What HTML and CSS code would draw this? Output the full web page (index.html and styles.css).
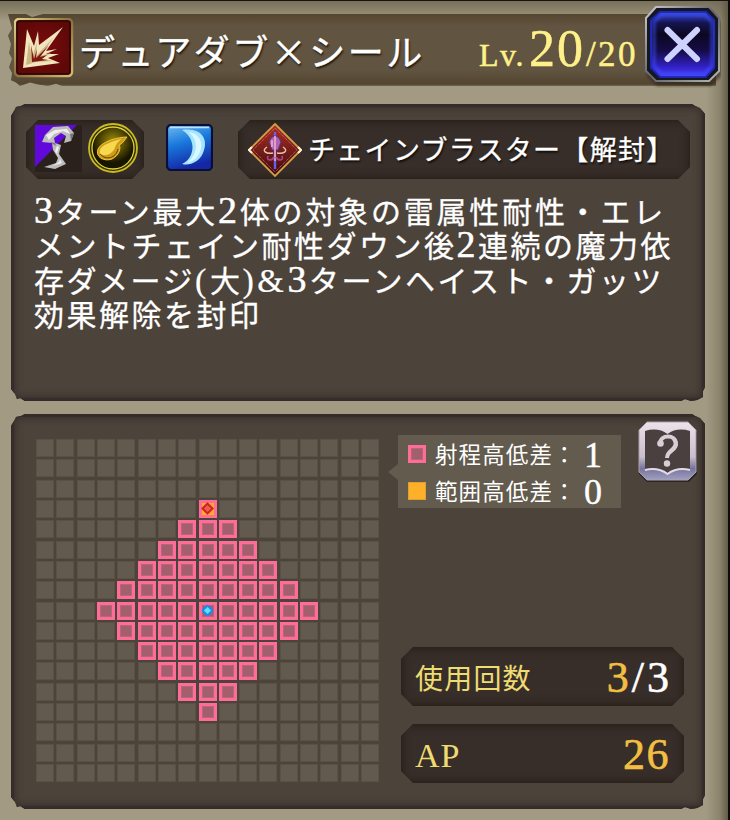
FILE: index.html
```html
<!DOCTYPE html>
<html lang="ja">
<head>
    <meta charset="UTF-8">
    <title>スキル詳細</title>
    <link rel="stylesheet" href="styles.css">
</head>
<body>
<div class="window">
    <div class="header">
        <svg class="skillicon" viewBox="0 0 60 60">
            <defs>
                <linearGradient id="gold" x1="0" y1="0" x2="1" y2="1">
                    <stop offset="0" stop-color="#e3d28c"/><stop offset=".5" stop-color="#8a6f38"/><stop offset="1" stop-color="#d8bc6c"/>
                </linearGradient>
                <radialGradient id="red"><stop offset="0" stop-color="#7d0c0c"/><stop offset="1" stop-color="#5e0808"/></radialGradient>
            </defs>
            <rect x="1" y="1" width="57" height="57" rx="4" fill="url(#red)" stroke="url(#gold)" stroke-width="2.5"/>
            <rect x="3" y="3" width="53" height="53" rx="3" fill="none" stroke="#2a0505" stroke-width="1.5"/>
            <path d="M9 50L13 11L20 28L24 13L25 27L49 9L32 33L43 31L32 36L45 36L34 40L46 45Z" fill="#f1e5bd"/>
            <path d="M12 47L15 24L18 40L23 24L22 38L40 19L26 38L37 35L27 41L39 43L22 44Z" fill="#cdb582"/>
            <path d="M17 27L20 41L23 31L22 40L35 27L26 39L33 37L28 41L34 42L18 44Z" fill="#7d1713"/>
        </svg>
        <div class="title">デュアダブ×シール</div>
        <div class="level"><span class="lv">Lv.</span><span class="now">20</span><span class="max">/20</span></div>
    </div>
    <svg class="close" viewBox="0 0 76 82">
        <defs>
            <linearGradient id="blue" x1="0" y1="0" x2="0" y2="1">
                <stop offset="0" stop-color="#3a4be0"/><stop offset=".17" stop-color="#15144f"/><stop offset=".35" stop-color="#0c0820"/>
                <stop offset=".6" stop-color="#150c48"/><stop offset=".85" stop-color="#3322c8"/><stop offset="1" stop-color="#4a43ff"/>
            </linearGradient>
            <linearGradient id="steel" x1="0" y1="0" x2="1" y2="1">
                <stop offset="0" stop-color="#c9cbd0"/><stop offset=".5" stop-color="#62636c"/><stop offset="1" stop-color="#b4b8b4"/>
            </linearGradient>
            <filter id="soft"><feGaussianBlur stdDeviation="1.6"/></filter>
        </defs>
        <path d="M12 5H66L76 16V70L66 80H12L2 70V16Z" fill="#2a2418" opacity=".6" filter="url(#soft)"/>
        <path d="M11 1H64L74 12V65L64 75H11L1 65V12Z" fill="#16171f" stroke="url(#steel)" stroke-width="2"/>
        <path d="M15 6H61L69 14V62L61 71H15L6 62V14Z" fill="url(#blue)" stroke="#1c24ac" stroke-width="2"/>
        <path d="M16 9H60L67 16V60L59 68H17L9 60V16Z" fill="none" stroke="#3e50ff" stroke-width="3" opacity=".65" filter="url(#soft)"/>
        <path d="M22.500 24L52 53M52 24L22.500 53" stroke="#cdd2ff" stroke-width="6" stroke-linecap="round"/>
    </svg>

    <div class="panel info">
        <div class="row">
            <div class="slot types">
                <svg class="weapon" viewBox="0 0 47 47">
                    <path d="M0 0H47V47H0Z" fill="#2b211c"/>
                    <path d="M0 0H42L0 42Z" fill="#6109da"/>
                    <path d="M10 10L18 2L33 1L39 8L36 16L29 18L31 11L26 8L19 13L20 18L26 20L24 29L31 39L20 44L9 42L21 38L23 33L18 25L17 18L7 17Z" fill="#bcbcbc"/>
                    <path d="M11 10L20 5L32 4L35 9L28 6L19 9L14 15ZM22 21L24 22L22 28L27 38L17 41L24 37L25 34L20 26Z" fill="#eee"/>
                    <path d="M15 17L20 18L21 21ZM35 9L39 8L36 16Z" fill="#76747c"/>
                </svg>
                <svg class="coin" viewBox="0 0 50 50">
                    <defs><radialGradient id="olive" cx=".5" cy=".35"><stop offset="0" stop-color="#a29008"/><stop offset="1" stop-color="#191600"/></radialGradient></defs>
                    <circle cx="25" cy="25" r="24" fill="#332e05" stroke="#c9bc20" stroke-width="1.8"/>
                    <circle cx="25" cy="25" r="21" fill="url(#olive)" stroke="#e0d437" stroke-width="1.3"/>
                    <path d="M39 14C31 14 14 18 10 26C7 34 16 39 24 36C32 32 33 24 31 22C34 21 36 18 39 14Z" fill="#d19a1b" stroke="#e9c63a"/>
                    <path d="M34 16C25 18 13 22 12 27C10 33 19 34 24 29C29 25 25 22 34 16Z" fill="#f7d94d"/>
                    <path d="M12 31C18 38 28 35 30 26" fill="none" stroke="#5a4300"/>
                </svg>
            </div>
            <svg class="moon" viewBox="0 0 47 47">
                <defs><linearGradient id="sky" x1="0" y1="0" x2=".3" y2="1">
                    <stop offset="0" stop-color="#72baf2"/><stop offset=".45" stop-color="#1979dc"/><stop offset="1" stop-color="#1527a5"/>
                </linearGradient></defs>
                <rect x="1" y="1" width="45" height="45" rx="4" fill="url(#sky)" stroke="#080d3a" stroke-width="2.2"/>
                <path d="M4 3.5H43" stroke="#c3e0f8" stroke-width="1.5"/>
                <path d="M16 6C36 3 43 16 37 29C33 38 24 42 16 40C29 34 31 15 16 6Z" fill="#a6e4ff"/>
                <path d="M23 8C35 10 38 21 33 30C30 36 25 38 21 39C32 30 33 17 23 8Z" fill="#dcf8ff"/>
            </svg>
            <div class="slot name">
                <svg class="emblem" viewBox="0 0 54 54">
                    <defs><linearGradient id="ruby" x1="0" y1="0" x2="0" y2="1"><stop offset="0" stop-color="#b03023"/><stop offset="1" stop-color="#3b0a0e"/></linearGradient></defs>
                    <path d="M27 1L53 27L27 53L1 27Z" fill="url(#ruby)" stroke="#d29c48" stroke-width="1.8"/>
                    <path d="M4 24L1 27L4 30M50 24L53 27L50 30" fill="none" stroke="#fff0d5" stroke-width="2"/>
                    <path d="M27 5L49 27L27 49L5 27Z" fill="none" stroke="#dc9180" stroke-width=".8" stroke-dasharray="1 1"/>
                    <path d="M27 9V46" stroke="#6b5cf0" stroke-width="2.4"/>
                    <path d="M23 15Q27 11 31 15L33 19L30 27H24L21 19Z" fill="#aa65b4" stroke="#5d307c"/>
                    <path d="M27 13V38M24 17V24" stroke="#efaecb" stroke-width="1.6"/>
                    <path d="M19 24C13 28 18 31 25 30M35 24C41 28 36 31 29 30" fill="none" stroke="#e8c4b0" stroke-width="1.4"/>
                    <path d="M20 33C18 38 24 38 26 34M34 33C36 38 30 38 28 34" fill="none" stroke="#a74482" stroke-width="1.8"/>
                </svg>
                <span class="nametext">チェインブラスター【解封】</span>
            </div>
        </div>
        <div class="desc">
            <p class="l1"><b>3</b>ターン最大<b>2</b>体の対象の雷属性耐性・エレ</p>
            <p class="l2">メントチェイン耐性ダウン後<b>2</b>連続の魔力依</p>
            <p class="l3">存ダメージ<b class="mark">(</b>大<b class="mark">)&amp;</b><b>3</b>ターンヘイスト・ガッツ</p>
            <p class="l4">効果解除を封印</p>
        </div>
    </div>

    <div class="panel range">
        <div class="map"></div>
        <div class="side">
            <div class="top">
                <div class="legend">
                    <div class="item"><i class="pink"></i><span>射程高低差：</span><b>1</b></div>
                    <div class="item"><i class="orange"></i><span>範囲高低差：</span><b>0</b></div>
                </div>
                <svg class="help" viewBox="0 0 60 62">
                    <defs><linearGradient id="silver" x1="0" y1="0" x2="0" y2="1">
                        <stop offset="0" stop-color="#eee2ea"/><stop offset=".6" stop-color="#c9becb"/><stop offset=".8" stop-color="#77749b"/><stop offset="1" stop-color="#a09fc2"/>
                    </linearGradient></defs>
                    <path d="M9 3H51L59 11V53L51 61H9L1 53V11Z" fill="#2b2623"/>
                    <path d="M9 1H50L58 9V51L50 59H9L1 51V9Z" fill="url(#silver)" stroke="#aaa1ae"/>
                    <path d="M7 10Q20 6 29.500 13Q39 6 52 10V49Q39 46 29.500 53Q20 46 7 49Z" fill="#49403f"/>
                    <path d="M7 49Q20 46 29.500 53Q39 46 52 49" fill="none" stroke="#e2dce8" stroke-width="2"/>
                    <path d="M22 23C22 13 38 13 38 23C38 30 29 29 29 37" fill="none" stroke="#dacdd3" stroke-width="4"/>
                    <path d="M36 18C40 24 36 27 32 31" fill="none" stroke="#dacdd3" stroke-width="4"/>
                    <circle cx="22.500" cy="22.500" r="3.300" fill="#dacdd3"/>
                    <circle cx="29" cy="42.500" r="3.200" fill="#dacdd3"/>
                </svg>
            </div>
            <div class="stats">
                <div class="slot stat"><span>使用回数</span><div class="value count">3<em>/3</em></div></div>
                <div class="slot stat"><span class="ap">AP</span><div class="value">26</div></div>
            </div>
        </div>
    </div>
</div>

<script>
    var map=document.querySelector(".map");
    var size=17,center=8,reach=5;
    var str="";
    for(var y=0;y<size;y++){
        for(var x=0;x<size;x++){
            var d=Math.abs(x-center)+Math.abs(y-center);
            var cls="cell";
            if(d<=reach){
                cls+=" hit";
            }
            if(d==0){
                cls+=" self";
            }
            if(x==center&&y==center-reach){
                cls+=" target";
            }
            str+=`<div class="${cls}"></div>`;
        }
    }
    map.innerHTML=str;
</script>
</body>
</html>
```

FILE: styles.css
```css
*{
    padding: 0;
    margin: 0;
    box-sizing: border-box;
}
body{
    width: 730px;
    height: 820px;
    overflow: hidden;
    background: #0c0c0e;
    font-family: "Liberation Serif","Noto Sans CJK JP",serif;
    color: #fff;
}
svg{
    display: block;
    flex: none;
}
b,i,em{
    font-weight: normal;
    font-style: normal;
}
.window{
    position: relative;
    width: 728px;
    height: 820px;
    padding: 14px 0 0 11px;
    border-top: 1px solid #15130f;
    background: linear-gradient(to left,#635b47,rgba(115,107,85,0.5) 8px,rgba(160,152,128,0) 22px),linear-gradient(#777059,#8d846c 10px,#a29a82 20px);
}
.header{
    display: flex;
    align-items: center;
    width: 708px;
    height: 72px;
    margin: -1px 0 18px -3px;
    padding-left: 6px;
    background: linear-gradient(#54452f,#615440 12px,#615440 56px,#534530 70px,#706650);
    clip-path: polygon(0 0,18px 0,24px 3px,35px 0,100% 0,100% 100%,54px 100%,48px 97%,40px 100%,30px 98%,22px 95%,12px 100%,8px 95%,3px 92%,4px 82%,1px 74%,4px 62%,1px 54%,3px 42%,0 30%,4px 20%);
}
.skillicon{
    width: 60px;
    height: 60px;
    margin-top: -4px;
}
.title{
    flex: none;
    width: 405px;
    padding-left: 5px;
    font-family: "Noto Sans CJK JP",sans-serif;
    font-size: 36px;
    line-height: 60px;
    letter-spacing: 2.5px;
    white-space: nowrap;
    text-shadow: 1px 2px 2px #1c160f;
    -webkit-text-stroke: 0.4px #fff;
}
.level{
    display: flex;
    align-items: baseline;
    margin-top: 4px;
    color: #fff18a;
    line-height: 60px;
    -webkit-text-stroke: 0.5px #fff18a;
}
.lv{
    width: 50px;
    font-size: 32px;
    letter-spacing: 1.5px;
}
.now{
    width: 57px;
    font-size: 52px;
    letter-spacing: 2px;
}
.max{
    font-size: 35px;
    letter-spacing: 2.4px;
}
.close{
    position: absolute;
    left: 645px;
    top: 5px;
    width: 76px;
    height: 82px;
}
.panel{
    width: 694px;
    background: #4c433b;
    box-shadow: inset 0 0 9px 3px #302824,inset 0 0 0 3px #40343a;
    clip-path: polygon(0 12px,3px 7px,5px 3px,10px 2px,14px 0,681px 0,684px 2px,689px 4px,694px 10px,694px calc(100% - 14px),692px calc(100% - 10px),692px calc(100% - 4px),686px calc(100% - 1px),680px 100%,674px calc(100% - 2px),670px 100%,14px 100%,9px calc(100% - 3px),6px calc(100% - 2px),4px calc(100% - 7px),0 calc(100% - 12px));
}
.info{
    height: 297px;
    padding: 16px 15px;
}
.row{
    display: flex;
    align-items: center;
    height: 59px;
}
.slot{
    display: flex;
    align-items: center;
    height: 59px;
    background: #372e2a;
    box-shadow: inset 0 0 9px 2px #291e18;
    clip-path: polygon(12px 0,calc(100% - 12px) 0,100% 12px,100% calc(100% - 12px),calc(100% - 12px) 100%,12px 100%,0 calc(100% - 12px),0 12px);
}
.types{
    width: 118px;
    gap: 6px;
    padding: 0 0 3px 9px;
    margin-right: 22px;
}
.weapon,.moon{
    width: 47px;
    height: 47px;
}
.coin{
    width: 50px;
    height: 50px;
}
.moon{
    margin: -4px 25px 0 0;
}
.name{
    width: 452px;
    padding-left: 10px;
    white-space: nowrap;
}
.emblem{
    width: 54px;
    height: 54px;
}
.nametext{
    margin-top: -3px;
    padding-left: 6px;
    font-family: "Noto Sans CJK JP",sans-serif;
    font-size: 27px;
    letter-spacing: 1.3px;
    text-shadow: 1px 2px 2px #110d0b;
    -webkit-text-stroke: 0.3px #fff;
}
.desc{
    padding: 14px 0 0 8px;
}
.desc p{
    height: 34.3px;
    font-family: "Noto Sans CJK JP",sans-serif;
    font-size: 30px;
    line-height: 34.3px;
    letter-spacing: 2.5px;
    white-space: nowrap;
    -webkit-text-stroke: 0.3px #fff;
}
.desc .l1{
    letter-spacing: 2.8px;
}
.desc b{
    font-family: "Liberation Serif",serif;
    font-size: 38px;
    line-height: 0;
    letter-spacing: 2.6px;
    -webkit-text-stroke: 0.5px #fff;
}
.desc .mark{
    font-size: 34px;
    letter-spacing: 3.6px;
    -webkit-text-stroke: 0.2px #fff;
}
.range{
    display: flex;
    height: 395px;
    margin-top: 13px;
    padding: 7px 6px 0 25px;
}
.map{
    display: grid;
    grid-template-columns: repeat(17,18px);
    grid-auto-rows: 18px;
    gap: 2.32px;
    width: 344px;
    height: 344px;
    margin-top: 18px;
}
.cell{
    background: #625a4e;
    border: 1px solid #5a5145;
}
.hit,.pink{
    background: #a35f6b;
    border: 3px solid #ff6c98;
    box-shadow: inset 0 0 0 1px #b6657a;
}
.self,.target{
    display: flex;
    align-items: center;
    justify-content: center;
}
.self::before,.target::before{
    content: "";
    flex: none;
    box-sizing: border-box;
    width: 9px;
    height: 9px;
    background: #ef5b51;
    border: 2px solid #c9271f;
    transform: rotate(45deg);
}
.target{
    background: #ffab25;
    box-shadow: none;
}
.self::before{
    background: #62dfff;
    border-color: #168cf3;
    border-radius: 2px;
}
.side{
    display: flex;
    flex-direction: column;
    justify-content: space-between;
    width: 318px;
    height: 362px;
}
.top{
    display: flex;
    justify-content: space-between;
    padding-left: 18px;
}
.legend{
    position: relative;
    width: 223px;
    height: 73px;
    margin-top: 14px;
    background: #625b4e;
}
.legend::before{
    content: "";
    position: absolute;
    left: -10px;
    top: 29px;
    border: 8px solid transparent;
    border-right: 10px solid #625b4e;
    border-left: 0;
}
.item{
    display: flex;
    align-items: center;
    height: 37px;
    padding-left: 10px;
}
.item i{
    width: 18px;
    height: 18px;
}
.orange{
    background: #ffb029;
    border: 1px solid #dda035;
}
.item span{
    width: 152px;
    margin-top: -2px;
    padding-left: 9px;
    font-family: "Noto Sans CJK JP",sans-serif;
    font-size: 22.5px;
    letter-spacing: 1.1px;
    line-height: 36px;
    white-space: nowrap;
}
.item b{
    width: 30px;
    padding-top: 2px;
    text-align: center;
    font-size: 36px;
    line-height: 34px;
    -webkit-text-stroke: 0.4px #fff;
}
.help{
    width: 60px;
    height: 62px;
}
.stats{
    display: flex;
    flex-direction: column;
    gap: 18px;
    padding-left: 21px;
}
.stat{
    justify-content: space-between;
    width: 283px;
    padding: 0 14px;
    color: #eedb72;
    font-size: 28px;
}
.stat span{
    font-family: "Noto Sans CJK JP",sans-serif;
    letter-spacing: 1.2px;
}
.stat .ap{
    padding-top: 4px;
    font-family: "Liberation Serif",serif;
    font-size: 34px;
    letter-spacing: 1px;
}
.value{
    padding-top: 1px;
    color: #f3bf42;
    font-size: 44px;
    letter-spacing: 1.5px;
    -webkit-text-stroke: 0.6px;
}
.count{
    letter-spacing: 3px;
    margin-right: -2px;
}
.value em{
    color: #fff;
}
```
